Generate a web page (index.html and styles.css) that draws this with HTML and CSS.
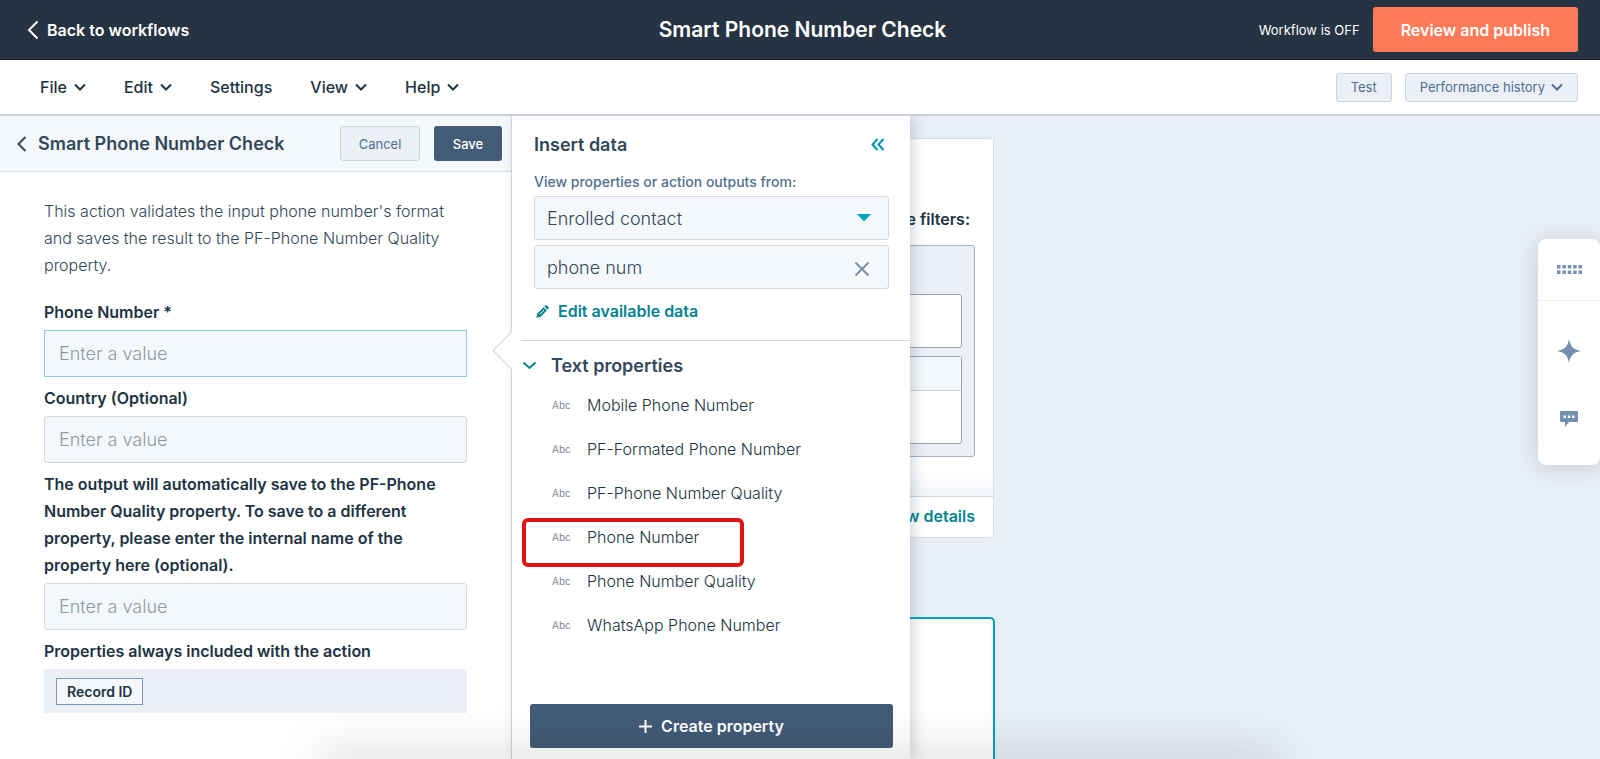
FILE: index.html
```html
<!DOCTYPE html>
<html lang="en">
<head>
    <meta charset="UTF-8">
    <meta name="viewport" content="width=device-width, initial-scale=1.0">
    <title>Smart Phone Number Check</title>
    <link rel="stylesheet" href="styles.css">
</head>
<body>
    <header class="topbar">
        <a href="#" class="back-link">
            <svg width="12" height="20" viewBox="0 0 12 20"><path d="M10.500 1.500L2 10l8.500 8.500"/></svg>
            Back to workflows
        </a>
        <h1 class="topbar-title">Smart Phone Number Check</h1>
        <div class="topbar-right">
            <span class="status">Workflow is OFF</span>
            <button class="publish">Review and publish</button>
        </div>
    </header>

    <nav class="menubar">
        <div class="menu">
            <button class="menu-item">File <svg class="chevron" viewBox="0 0 12 8"><path d="M1 1.500l5 5 5-5"/></svg></button>
            <button class="menu-item">Edit <svg class="chevron" viewBox="0 0 12 8"><path d="M1 1.500l5 5 5-5"/></svg></button>
            <button class="menu-item">Settings</button>
            <button class="menu-item">View <svg class="chevron" viewBox="0 0 12 8"><path d="M1 1.500l5 5 5-5"/></svg></button>
            <button class="menu-item">Help <svg class="chevron" viewBox="0 0 12 8"><path d="M1 1.500l5 5 5-5"/></svg></button>
        </div>
        <div class="menu-actions">
            <button class="small-button">Test</button>
            <button class="small-button">Performance history <svg class="chevron" viewBox="0 0 12 8"><path d="M1 1.500l5 5 5-5"/></svg></button>
        </div>
    </nav>

    <main class="workspace">
        <section class="action-panel">
            <div class="action-header">
                <button class="icon-button" aria-label="Back">
                    <svg width="10" height="16" viewBox="0 0 10 16"><path d="M8.500 1L1.500 8l7 7"/></svg>
                </button>
                <h2>Smart Phone Number Check</h2>
                <button class="button cancel">Cancel</button>
                <button class="button save">Save</button>
            </div>
            <form class="action-form">
                <p class="description">This action validates the input phone number's format and saves the result to the PF-Phone Number Quality property.</p>
                <div class="field">
                    <label for="phone">Phone Number *</label>
                    <input type="text" id="phone" class="active" placeholder="Enter a value">
                </div>
                <div class="field">
                    <label for="country">Country (Optional)</label>
                    <input type="text" id="country" placeholder="Enter a value">
                </div>
                <div class="field">
                    <label for="output">The output will automatically save to the PF-Phone Number Quality property. To save to a different property, please enter the internal name of the property here (optional).</label>
                    <input type="text" id="output" placeholder="Enter a value">
                </div>
                <div class="field">
                    <span class="field-title">Properties always included with the action</span>
                    <div class="included"><span class="tag">Record ID</span></div>
                </div>
            </form>
        </section>

        <section class="insert-panel">
            <div class="insert-top">
                <div class="insert-header">
                    <h2>Insert data</h2>
                    <button class="icon-button collapse" aria-label="Collapse">
                        <svg width="14" height="13" viewBox="0 0 14 13"><path d="M6.500 1L1.500 6.500l5 5.500M12.500 1l-5 5.500 5 5.500"/></svg>
                    </button>
                </div>
                <label class="source-label" for="source">View properties or action outputs from:</label>
                <div class="control">
                    <select id="source">
                        <option>Enrolled contact</option>
                    </select>
                    <svg class="caret" width="14" height="8" viewBox="0 0 14 8"><path d="M0 0h14L7 7.500z"/></svg>
                </div>
                <div class="control">
                    <input type="text" value="phone num" aria-label="Search properties">
                    <button class="clear" aria-label="Clear">
                        <svg width="16" height="16" viewBox="0 0 16 16"><path d="M1.500 1.500l13 13M14.500 1.500l-13 13"/></svg>
                    </button>
                </div>
                <a href="#" class="edit-link">
                    <svg width="13" height="13" viewBox="0 0 13 13"><path d="M.3 12.700l1-4.200L7.600 2.200l3.200 3.200-6.300 6.300zM8.300 1.500l.9-.9a1.200 1.200 0 0 1 1.700 0l1.500 1.500a1.200 1.200 0 0 1 0 1.700l-.9.900z"/><path class="pencil-line" d="M3.500 9.500l4.500-4.500"/></svg>
                    Edit available data
                </a>
            </div>
            <div class="properties">
                <button class="group-toggle">
                    <svg width="15" height="9" viewBox="0 0 15 9"><path d="M1.500 1.500l6 5.500 6-5.500"/></svg>
                    Text properties
                </button>
                <ul class="property-list">
                    <li><span class="type">Abc</span>Mobile Phone Number</li>
                    <li><span class="type">Abc</span>PF-Formated Phone Number</li>
                    <li><span class="type">Abc</span>PF-Phone Number Quality</li>
                    <li class="marked"><span class="type">Abc</span>Phone Number</li>
                    <li><span class="type">Abc</span>Phone Number Quality</li>
                    <li><span class="type">Abc</span>WhatsApp Phone Number</li>
                </ul>
            </div>
            <button class="create">
                <svg width="13" height="13" viewBox="0 0 13 13"><path d="M6.500 0v13M0 6.500h13"/></svg>
                Create property
            </button>
        </section>

        <section class="canvas">
            <div class="card">
                <div class="card-body">
                    <p>the filters:</p>
                    <div class="filter-group">
                        <div class="filter"></div>
                        <div class="filter tall"><div class="filter-head"></div></div>
                    </div>
                </div>
                <div class="card-footer"><a href="#">View details</a></div>
            </div>
            <div class="card selected"></div>
        </section>
    </main>

    <aside class="dock">
        <button class="dock-grip" aria-label="Move">
            <svg width="25" height="9" viewBox="0 0 25 9"><path d="M0 0h3.500v3.500H0zM5.400 0h3.500v3.500H5.400zM10.800 0h3.500v3.500h-3.500zM16.200 0h3.500v3.500h-3.500zM21.500 0H25v3.500h-3.500zM0 5.500h3.500V9H0zM5.400 5.500h3.500V9H5.400zM10.800 5.500h3.500V9h-3.500zM16.200 5.500h3.500V9h-3.500zM21.500 5.500H25V9h-3.500z"/></svg>
        </button>
        <button aria-label="Assistant">
            <svg width="24" height="24" viewBox="0 0 24 24"><path d="M12 0c1.200 6.500 3.500 10.500 12 12-8.500 1.500-10.800 5.500-12 12-1.200-6.500-3.500-10.500-12-12C8.500 10.500 10.800 6.500 12 0z"/></svg>
        </button>
        <button aria-label="Comments">
            <svg width="18" height="16" viewBox="0 0 18 16"><path fill-rule="evenodd" d="M1 0h16a1 1 0 0 1 1 1v9a1 1 0 0 1-1 1H9l-4 5v-5H1a1 1 0 0 1-1-1V1a1 1 0 0 1 1-1zM3.500 4.500v2.500H6V4.500zM7.800 4.500v2.500h2.500V4.500zM12 4.500v2.500h2.500V4.500z"/></svg>
        </button>
    </aside>
    <div class="bottom-shade"></div>
</body>
</html>
```

FILE: styles.css
```css
*, *::before, *::after {
    box-sizing: border-box;
}
body {
    font-family: Inter, "Open Sans", sans-serif;
    font-size: 16px;
    color: #33475b;
    margin: 0;
    min-height: 100vh;
    display: flex;
    flex-direction: column;
    overflow: hidden;
    position: relative;
}
h1, h2, p, ul {
    margin: 0;
    padding: 0;
}
button, input, select {
    font-family: inherit;
    color: inherit;
}
button {
    background: none;
    border: none;
    padding: 0;
    cursor: pointer;
}
svg {
    flex: none;
    display: block;
}
a {
    text-decoration: none;
}

/* top bar */
.topbar {
    display: grid;
    grid-template-columns: 1fr auto 1fr;
    align-items: center;
    height: 60px;
    padding: 0 22px 0 27px;
    background: #253342;
    border-bottom: 1px solid #141f2b;
    color: #fff;
}
.back-link {
    display: flex;
    align-items: center;
    gap: 8px;
    color: #fff;
    font-size: 16px;
    font-weight: 600;
}
.back-link svg path {
    fill: none;
    stroke: #fff;
    stroke-width: 2;
}
.topbar-title {
    font-size: 21px;
    font-weight: 600;
}
.topbar-right {
    display: flex;
    justify-content: flex-end;
    align-items: center;
    gap: 13px;
}
.status {
    font-size: 13px;
}
.publish {
    height: 45px;
    padding: 0 28px;
    background: #ff7a59;
    border-radius: 3px;
    color: #fff;
    font-size: 16px;
    font-weight: 600;
}

/* menu bar */
.menubar {
    display: flex;
    justify-content: space-between;
    align-items: center;
    height: 56px;
    padding: 0 22px 0 40px;
    background: #fff;
    border-bottom: 2px solid #cbd0dc;
}
.menu {
    display: flex;
    gap: 38px;
}
.menu-item {
    display: flex;
    align-items: center;
    gap: 7px;
    font-size: 16px;
    font-weight: 500;
    color: #213343;
}
.chevron {
    width: 12px;
    height: 8px;
}
.chevron path {
    fill: none;
    stroke: currentColor;
    stroke-width: 2;
}
.menu-actions {
    display: flex;
    gap: 13px;
}
.small-button {
    display: flex;
    align-items: center;
    gap: 6px;
    height: 29px;
    padding: 0 14px;
    background: #eaf0f6;
    border: 1px solid #cbd6e2;
    border-radius: 3px;
    font-size: 13px;
    color: #506e91;
}

/* panels */
.workspace {
    flex: 1;
    display: grid;
    grid-template-columns: 511px 399px 1fr;
    background: #e9eff6;
}
.action-panel {
    background: #fff;
}
.action-header {
    display: flex;
    align-items: center;
    height: 56px;
    padding: 0 9px 0 17px;
    background: #f5f8fa;
    border-bottom: 1px solid #d5dde5;
}
.action-header h2 {
    flex: 1;
    margin-left: 11px;
    font-size: 18px;
    font-weight: 600;
}
.icon-button path {
    fill: none;
    stroke: #33475b;
    stroke-width: 2;
}
.button {
    height: 35px;
    border-radius: 3px;
    font-size: 13px;
}
.cancel {
    width: 80px;
    background: #eaf0f6;
    border: 1px solid #cbd6e2;
    color: #506e91;
}
.save {
    width: 68px;
    margin-left: 14px;
    background: #425b76;
    color: #fff;
    font-weight: 500;
}
.action-form {
    padding: 26px 44px 0;
    line-height: 27px;
}
.description {
    margin-bottom: 20px;
    font-weight: 300;
}
.field {
    margin-bottom: 8px;
}
.field label, .field-title {
    display: block;
    margin-bottom: 4px;
    color: #213343;
    font-weight: 600;
}
.field input {
    display: block;
    width: 100%;
    height: 47px;
    padding: 0 14px;
    background: #f5f8fa;
    border: 1px solid #d2d9e0;
    border-radius: 3px;
    font-size: 18px;
    font-weight: 300;
}
.field input::placeholder {
    color: #8e99a6;
}
.field input.active {
    border-color: #8fcdd2;
    border-radius: 0;
}
.included {
    display: flex;
    align-items: center;
    height: 44px;
    padding: 0 12px;
    background: #eaf0f6;
}
.tag {
    height: 27px;
    padding: 0 10px;
    background: #f5f8fa;
    border: 1px solid #7c98b6;
    color: #213343;
    font-size: 14px;
    font-weight: 600;
    line-height: 25px;
}

.insert-panel {
    position: relative;
    z-index: 1;
    display: flex;
    flex-direction: column;
    background: #fff;
    border-left: 1px solid #cbd6e2;
    box-shadow: 4px 0 12px rgba(45, 62, 80, 0.2);
    clip-path: inset(0 -20px 0 -30px);
}
/* pointer towards the active field */
.insert-panel::before {
    content: "";
    position: absolute;
    left: -14px;
    top: 221px;
    width: 27px;
    height: 27px;
    background: #fff;
    border-left: 1px solid #cbd6e2;
    border-bottom: 1px solid #cbd6e2;
    transform: rotate(45deg);
}
.insert-top {
    margin-left: 9px;
    padding: 13px 21px 0 13px;
    height: 225px;
    border-bottom: 1px solid #cbd6e2;
    position: relative;
}
.insert-header {
    display: flex;
    justify-content: space-between;
    align-items: center;
    height: 30px;
}
.insert-header h2, .group-toggle {
    font-size: 18px;
    font-weight: 600;
    color: #33475b;
}
.collapse {
    margin-right: 4px;
}
.collapse path {
    stroke: #0091ae;
}
.source-label {
    display: block;
    margin: 13px 0 4px;
    font-size: 14px;
    font-weight: 500;
    line-height: 20px;
    color: #516f90;
}
.control {
    position: relative;
    margin-bottom: 5px;
}
.control select, .control input {
    appearance: none;
    display: block;
    width: 100%;
    height: 44px;
    padding: 0 12px;
    background: #f5f8fa;
    border: 1px solid #d2d9e0;
    border-radius: 3px;
    font-size: 18px;
    font-weight: 300;
}
.caret {
    position: absolute;
    right: 18px;
    top: 18px;
    fill: #00a4bd;
    pointer-events: none;
}
.clear {
    position: absolute;
    right: 19px;
    top: 16px;
}
.clear path {
    stroke: #7c8fa8;
    stroke-width: 2;
}
.edit-link {
    display: flex;
    align-items: center;
    gap: 9px;
    margin: 12px 0 0 2px;
    color: #00838f;
    font-size: 16px;
    font-weight: 600;
    line-height: 20px;
}
.edit-link svg {
    fill: #00838f;
}
.pencil-line {
    stroke: #fff;
}
.properties {
    flex: 1;
    padding: 11px 10px 0;
}
.group-toggle {
    display: flex;
    align-items: center;
    gap: 14px;
    height: 26px;
}
.group-toggle path {
    fill: none;
    stroke: #00838f;
    stroke-width: 2;
}
.property-list {
    list-style: none;
    padding-top: 5px;
}
.property-list li {
    display: flex;
    align-items: center;
    height: 44px;
    padding-left: 30px;
    position: relative;
    font-weight: 300;
    color: #213343;
}
.type {
    width: 35px;
    font-size: 10px;
    font-weight: 400;
    color: #7c8b9c;
}
/* highlight frame, drawn over the row */
.marked::after {
    content: "";
    position: absolute;
    left: 0;
    top: 3px;
    width: 222px;
    height: 49px;
    border: 4px solid #e01111;
    border-radius: 6px;
}
.create {
    display: flex;
    justify-content: center;
    align-items: center;
    gap: 9px;
    height: 44px;
    margin: 0 17px 11px 18px;
    background: #425b76;
    border-radius: 3px;
    color: #fff;
    font-size: 16px;
    font-weight: 600;
}
.create path {
    stroke: #fff;
    stroke-width: 2;
}

/* workflow canvas, the cards run on under the insert panel */
.canvas {
    padding-top: 22px;
    display: flex;
    flex-direction: column;
}
.card {
    width: 384px;
    margin-left: -300px;
    background: #fff;
    border: 1px solid #d5dde8;
    border-radius: 4px;
    text-align: right;
}
.card-body {
    height: 357px;
    padding: 69px 18px 0;
    background: linear-gradient(#fff 92%, #f2f5f9);
}
.card-body p {
    padding-right: 5px;
    margin-bottom: 15px;
    font-weight: 600;
    line-height: 22px;
    color: #213343;
}
.filter-group {
    height: 212px;
    padding: 48px 12px 0;
    background: #eaf0f6;
    border: 1px solid #a6b1c2;
    border-radius: 3px;
}
.filter {
    height: 54px;
    margin-bottom: 8px;
    background: #fff;
    border: 1px solid #98a3b5;
    border-radius: 3px;
}
.tall {
    height: 88px;
}
.filter-head {
    height: 34px;
    background: #f5f8fa;
    border-bottom: 1px solid #cbd6e2;
}
.card-footer {
    height: 41px;
    padding-right: 18px;
    border-top: 1px solid #cbd6e2;
    line-height: 39px;
}
.card-footer a {
    color: #00838f;
    font-size: 16px;
    font-weight: 600;
}
.selected {
    flex: 1;
    width: 385px;
    margin-top: 79px;
    border: 2px solid #00a4bd;
    border-bottom: none;
    border-radius: 5px 5px 0 0;
}

/* floating dock on the right edge */
.dock {
    position: absolute;
    right: 0;
    top: 239px;
    z-index: 2;
    width: 62px;
    padding-bottom: 12px;
    background: #fff;
    border-radius: 8px;
    box-shadow: 0 2px 24px rgba(45, 62, 80, 0.2);
}
.dock button {
    display: flex;
    justify-content: center;
    align-items: center;
    width: 100%;
    height: 68px;
}
.dock .dock-grip {
    height: 62px;
    margin-bottom: 16px;
    border-bottom: 1px solid #eaf0f6;
}
.dock svg {
    fill: #7590ae;
}
.bottom-shade {
    position: absolute;
    z-index: 3;
    left: 20%;
    right: 20%;
    bottom: -20px;
    height: 20px;
    box-shadow: 0 0 50px 0 rgba(0, 0, 0, 0.25);
    pointer-events: none;
}
```
